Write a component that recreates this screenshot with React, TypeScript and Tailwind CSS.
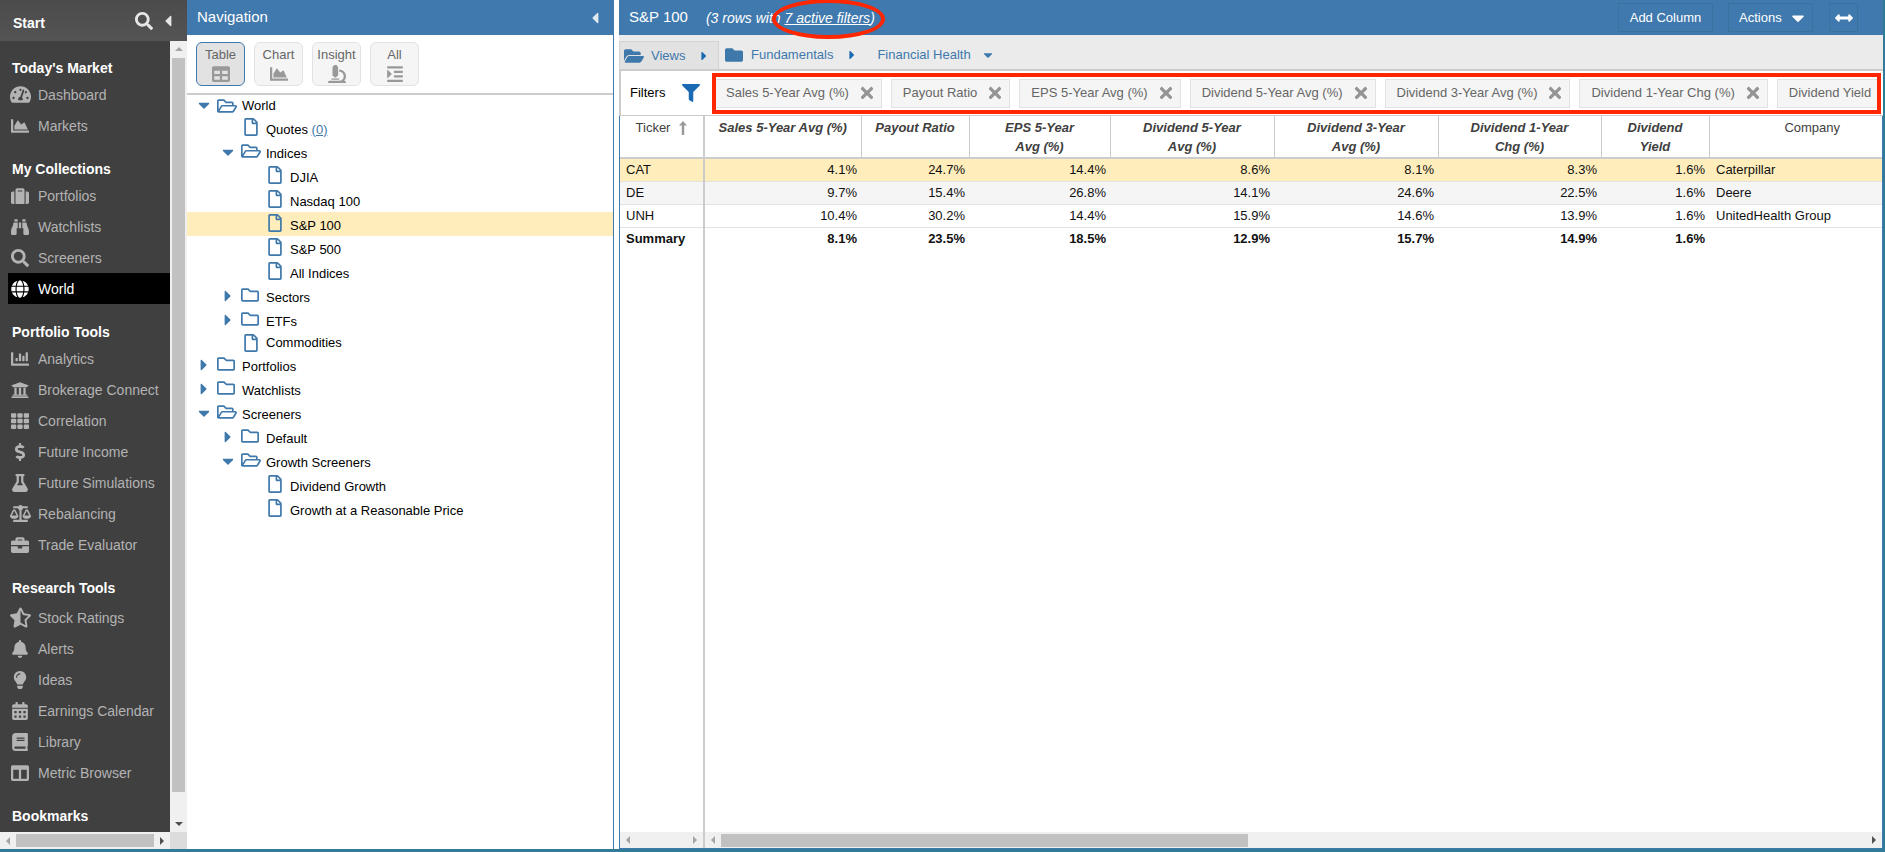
import type { IconType } from "react-icons";
import {
  FaArrowsAltH,
  FaBalanceScale,
  FaBell,
  FaBinoculars,
  FaBook,
  FaBriefcase,
  FaCalendarAlt,
  FaCaretDown,
  FaCaretLeft,
  FaCaretRight,
  FaChartArea,
  FaChartBar,
  FaColumns,
  FaDollarSign,
  FaFilter,
  FaFlask,
  FaFolder,
  FaFolderOpen,
  FaGlobe,
  FaIndent,
  FaLightbulb,
  FaMicroscope,
  FaRegFile,
  FaRegFolder,
  FaRegFolderOpen,
  FaSearch,
  FaStarHalfAlt,
  FaSuitcase,
  FaTable,
  FaTachometerAlt,
  FaTh,
  FaTimes,
  FaUniversity,
} from "react-icons/fa";

interface MenuGroup {
  title: string;
  loose?: boolean;
  items: { label: string; icon: IconType; active?: boolean; wide?: boolean }[];
}

const MENU: MenuGroup[] = [
  {
    title: "Today's Market",
    items: [
      { label: "Dashboard", icon: FaTachometerAlt, wide: true },
      { label: "Markets", icon: FaChartArea },
    ],
  },
  {
    title: "My Collections",
    items: [
      { label: "Portfolios", icon: FaSuitcase },
      { label: "Watchlists", icon: FaBinoculars },
      { label: "Screeners", icon: FaSearch },
      { label: "World", icon: FaGlobe, active: true },
    ],
  },
  {
    title: "Portfolio Tools",
    items: [
      { label: "Analytics", icon: FaChartBar },
      { label: "Brokerage Connect", icon: FaUniversity },
      { label: "Correlation", icon: FaTh },
      { label: "Future Income", icon: FaDollarSign },
      { label: "Future Simulations", icon: FaFlask },
      { label: "Rebalancing", icon: FaBalanceScale, wide: true },
      { label: "Trade Evaluator", icon: FaBriefcase },
    ],
  },
  {
    title: "Research Tools",
    loose: true,
    items: [
      { label: "Stock Ratings", icon: FaStarHalfAlt, wide: true },
      { label: "Alerts", icon: FaBell },
      { label: "Ideas", icon: FaLightbulb },
      { label: "Earnings Calendar", icon: FaCalendarAlt },
      { label: "Library", icon: FaBook },
      { label: "Metric Browser", icon: FaColumns },
    ],
  },
  { title: "Bookmarks", items: [] },
];

interface TreeNode {
  label: string;
  level: 0 | 1 | 2;
  kind: "open" | "closed" | "file";
  count?: number;
  selected?: boolean;
  tight?: boolean;
}

const TREE: TreeNode[] = [
  { label: "World", level: 0, kind: "open", tight: true },
  { label: "Quotes", level: 1, kind: "file", count: 0 },
  { label: "Indices", level: 1, kind: "open" },
  { label: "DJIA", level: 2, kind: "file" },
  { label: "Nasdaq 100", level: 2, kind: "file" },
  { label: "S&P 100", level: 2, kind: "file", selected: true },
  { label: "S&P 500", level: 2, kind: "file" },
  { label: "All Indices", level: 2, kind: "file" },
  { label: "Sectors", level: 1, kind: "closed" },
  { label: "ETFs", level: 1, kind: "closed" },
  { label: "Commodities", level: 1, kind: "file", tight: true },
  { label: "Portfolios", level: 0, kind: "closed" },
  { label: "Watchlists", level: 0, kind: "closed" },
  { label: "Screeners", level: 0, kind: "open" },
  { label: "Default", level: 1, kind: "closed" },
  { label: "Growth Screeners", level: 1, kind: "open" },
  { label: "Dividend Growth", level: 2, kind: "file" },
  { label: "Growth at a Reasonable Price", level: 2, kind: "file" },
];

const INDENT = ["pl-2", "pl-[32px]", "pl-[56px]"];

const MODES: { label: string; icon: IconType; active?: boolean }[] = [
  { label: "Table", icon: FaTable, active: true },
  { label: "Chart", icon: FaChartArea },
  { label: "Insight", icon: FaMicroscope },
  { label: "All", icon: FaIndent },
];

const FILTERS = [
  "Sales 5-Year Avg (%)",
  "Payout Ratio",
  "EPS 5-Year Avg (%)",
  "Dividend 5-Year Avg (%)",
  "Dividend 3-Year Avg (%)",
  "Dividend 1-Year Chg (%)",
  "Dividend Yield",
];

const COLUMNS = [
  { lines: ["Sales 5-Year Avg (%)"], width: "w-[156px]" },
  { lines: ["Payout Ratio"], width: "w-[108px]" },
  { lines: ["EPS 5-Year", "Avg (%)"], width: "w-[141px]" },
  { lines: ["Dividend 5-Year", "Avg (%)"], width: "w-[164px]" },
  { lines: ["Dividend 3-Year", "Avg (%)"], width: "w-[164px]" },
  { lines: ["Dividend 1-Year", "Chg (%)"], width: "w-[163px]" },
  { lines: ["Dividend", "Yield"], width: "w-[108px]" },
];

const ROWS = [
  {
    ticker: "CAT",
    company: "Caterpillar",
    values: ["4.1%", "24.7%", "14.4%", "8.6%", "8.1%", "8.3%", "1.6%"],
    tone: "bg-[#ffeebb]",
  },
  {
    ticker: "DE",
    company: "Deere",
    values: ["9.7%", "15.4%", "26.8%", "14.1%", "24.6%", "22.5%", "1.6%"],
    tone: "bg-[#f5f5f5]",
  },
  {
    ticker: "UNH",
    company: "UnitedHealth Group",
    values: ["10.4%", "30.2%", "14.4%", "15.9%", "14.6%", "13.9%", "1.6%"],
    tone: "bg-white",
  },
];

const SUMMARY = ["8.1%", "23.5%", "18.5%", "12.9%", "15.7%", "14.9%", "1.6%"];

type Direction = "up" | "down" | "left" | "right";

const ARROW_POINTS: Record<Direction, string> = {
  up: "4,10 8,6 12,10",
  down: "4,6 8,10 12,6",
  left: "10,4 6,8 10,12",
  right: "6,4 10,8 6,12",
};

function ScrollArrow({ to, dim }: { to: Direction; dim?: boolean }) {
  return (
    <svg
      viewBox="0 0 16 16"
      className={`size-4 flex-none ${dim ? "fill-[#a3a3a3]" : "fill-[#505050]"}`}
      aria-hidden="true"
    >
      <polygon points={ARROW_POINTS[to]} />
    </svg>
  );
}

function Sidebar() {
  return (
    <aside className="flex w-[187px] flex-none flex-col bg-[#404040]">
      <header className="flex h-[41px] flex-none items-center bg-gradient-to-b from-[#4b4b4b] to-[#545454] pr-[10px] pl-[13px] text-[#e6e6e6]">
        <span className="flex-1 pt-1 text-sm font-bold text-white">Start</span>
        <button aria-label="Search" className="text-lg">
          <FaSearch />
        </button>
        <button aria-label="Collapse menu" className="ml-[6px] text-lg">
          <FaCaretLeft />
        </button>
      </header>

      <div className="flex min-h-0 flex-1">
        <nav className="min-w-0 flex-1 overflow-hidden">
          {MENU.map((group) => (
            <section key={group.title}>
              <h2
                className={`pt-[17px] pl-3 text-sm leading-5 font-bold text-white ${
                  group.loose ? "pb-1" : "pb-px"
                }`}
              >
                {group.title}
              </h2>
              <ul className="pb-px">
                {group.items.map(({ label, icon: Icon, active, wide }) => (
                  <li key={label}>
                    <a
                      href="#"
                      className={`ml-2 flex h-[31px] items-center whitespace-nowrap text-sm ${
                        active ? "bg-black text-white" : "text-[#b3b3b3]"
                      }`}
                    >
                      <span
                        className={`flex w-6 flex-none justify-center ${
                          wide ? "text-[21px]" : "text-lg"
                        }`}
                      >
                        <Icon className="flex-none" />
                      </span>
                      <span className="pl-[6px]">{label}</span>
                    </a>
                  </li>
                ))}
              </ul>
            </section>
          ))}
        </nav>
        <div className="flex w-[17px] flex-none flex-col items-center bg-[#f0f0f0]">
          <ScrollArrow to="up" dim />
          <div className="mt-px mb-6 w-[13px] flex-1 bg-[#c1c1c1]" />
          <ScrollArrow to="down" />
        </div>
      </div>

      <div className="flex h-[17px] flex-none">
        <div className="flex flex-1 items-center bg-[#f0f0f0]">
          <ScrollArrow to="left" dim />
          <div className="h-[13px] flex-1 bg-[#c1c1c1]" />
          <ScrollArrow to="right" />
        </div>
        <div className="w-[17px] bg-[#dcdcdc]" />
      </div>
    </aside>
  );
}

function TreeRow({ node }: { node: TreeNode }) {
  const Caret = node.kind === "open" ? FaCaretDown : FaCaretRight;
  const Icon =
    node.kind === "file"
      ? FaRegFile
      : node.kind === "open"
        ? FaRegFolderOpen
        : FaRegFolder;

  return (
    <li
      className={`flex items-center ${INDENT[node.level]} ${
        node.tight ? "h-[21px]" : "h-6"
      } ${node.selected ? "bg-[#ffeebb]" : ""}`}
    >
      <span className="flex w-[22px] flex-none pb-px text-lg text-[#3f78ab]">
        {node.kind !== "file" && <Caret />}
      </span>
      <span
        className={`flex w-[25px] flex-none text-[#3f78ab] ${
          node.tight ? "" : "pb-[3px]"
        } ${node.kind === "file" ? "pl-px" : ""} ${
          node.kind === "open" ? "text-xl" : "text-lg"
        }`}
      >
        <Icon />
      </span>
      <span className={node.tight ? "" : "pt-[3px]"}>
        {node.label}
        {node.count !== undefined && (
          <>
            {" "}
            <a href="#" className="text-[#3f78ab] underline">
              ({node.count})
            </a>
          </>
        )}
      </span>
    </li>
  );
}

function NavigationPanel() {
  return (
    <section className="flex w-[427px] flex-none flex-col bg-white">
      <header className="flex h-[35px] flex-none items-center justify-between bg-[#4079ad] pr-[10px] pl-[10px] text-[15px] text-white">
        <h1>Navigation</h1>
        <button aria-label="Collapse navigation" className="text-lg text-[#dfe9f2]">
          <FaCaretLeft />
        </button>
      </header>
      <div className="flex min-h-0 flex-1 flex-col border-r border-[#4079ad]">
        <div className="flex gap-[9px] border-b-2 border-[#ccc] px-[9px] py-[7px]">
          {MODES.map(({ label, icon: Icon, active }) => (
            <button
              key={label}
              className={`flex h-11 w-[49px] flex-col items-center rounded-md border pt-0.5 leading-5 text-[#666] ${
                active
                  ? "border-[#4079ad] bg-[#e2e2e2]"
                  : "border-[#e2e2e2] bg-[#f5f5f5]"
              }`}
            >
              {label}
              <Icon className="text-lg text-[#999]" />
            </button>
          ))}
        </div>
        <ul className="text-black">
          {TREE.map((node) => (
            <TreeRow key={node.label} node={node} />
          ))}
        </ul>
      </div>
    </section>
  );
}

function MainHeader() {
  return (
    <header className="flex h-[35px] flex-none items-center bg-[#4079ad] pr-[25px] pl-[10px] text-white">
      <h1 className="text-[15px]">S&amp;P 100</h1>
      <p className="ml-[18px] flex-1 text-sm italic">
        (3 rows with{" "}
        <span className="relative">
          <a href="#" className="underline">
            7 active filters
          </a>
          <span className="absolute -top-[11px] -right-[15px] -left-[13px] h-10 rounded-[50%] border-4 border-[#ff2600]" />
        </span>
        )
      </p>
      <button className="h-[29px] w-[95px] border border-[#3a719f]">
        Add Column
      </button>
      <button className="ml-[15px] flex h-[29px] w-[85px] items-center justify-between border border-[#3a719f] pr-1 pl-[10px]">
        Actions
        <FaCaretDown className="text-xl" />
      </button>
      <button
        aria-label="Fit width"
        className="ml-4 flex h-[29px] w-[29px] items-center justify-center border border-[#3a719f] text-lg"
      >
        <FaArrowsAltH />
      </button>
    </header>
  );
}

function Breadcrumbs() {
  return (
    <nav className="flex h-9 flex-none items-end border-b-2 border-[#ccc] bg-[#ebebeb] text-[#3f78ab]">
      <a
        href="#"
        className="flex h-7 w-[100px] items-center border border-b-0 border-[#d3d3d3] bg-[#e2e2e2] pl-1"
      >
        <FaFolderOpen className="text-xl" />
        <span className="pl-[7px]">Views</span>
        <FaCaretRight className="ml-3 text-sm text-[#1a6ab3]" />
      </a>
      <a href="#" className="flex h-7 items-center pl-[6px]">
        <FaFolder className="text-lg" />
        <span className="pl-2">Fundamentals</span>
        <FaCaretRight className="ml-3 text-sm text-[#1a6ab3]" />
      </a>
      <a href="#" className="flex h-7 items-center pl-[18px]">
        Financial Health
        <FaCaretDown className="ml-[10px] text-sm" />
      </a>
    </nav>
  );
}

function FilterBar() {
  return (
    <div className="relative flex h-[45px] flex-none items-center border-b border-l-2 border-[#ccc] bg-white pl-[9px]">
      <span className="w-[52px] flex-none text-black">Filters</span>
      <FaFilter className="flex-none text-lg text-[#1a6ab3]" />
      <ul className="mr-[6px] ml-[14px] flex min-w-0 flex-1 gap-[9px] overflow-hidden">
        {FILTERS.map((name) => (
          <li
            key={name}
            className="flex h-[29px] flex-none items-center border border-[#e2e2e2] bg-[#f5f5f5] pl-[11px] whitespace-nowrap text-[#666]"
          >
            {name}
            <button
              aria-label={`Remove ${name}`}
              className="pr-[5px] pl-[9px] text-lg text-[#949494]"
            >
              <FaTimes />
            </button>
          </li>
        ))}
      </ul>
      <span className="pointer-events-none absolute top-[2px] right-[2px] bottom-px left-[91px] border-4 border-[#ff2600]" />
    </div>
  );
}

function TickerPane() {
  return (
    <div className="flex w-[85px] flex-none flex-col border-r-2 border-[#ccc]">
      <table className="w-full border-collapse">
        <thead>
          <tr className="h-[42px] border-b-2 border-[#ccc] text-[#404040]">
            <th className="p-0 pt-0.5 align-top leading-[19px] font-normal">
              <span className="flex items-center justify-center gap-[9px]">
                Ticker
                <svg
                  viewBox="0 0 8 14"
                  className="h-[14px] w-2 fill-[#999]"
                  aria-hidden="true"
                >
                  <path d="M4 0 8 4.5H5.2V14H2.8V4.5H0Z" />
                </svg>
              </span>
            </th>
          </tr>
        </thead>
        <tbody>
          {ROWS.map((row) => (
            <tr
              key={row.ticker}
              className={`h-[23px] border-b border-[#e2e2e2] ${row.tone}`}
            >
              <td className="p-0 pl-[6px]">{row.ticker}</td>
            </tr>
          ))}
          <tr className="h-[23px] font-bold">
            <td className="p-0 pl-[6px]">Summary</td>
          </tr>
        </tbody>
      </table>
      <div className="mt-auto flex h-4 items-center justify-between bg-[#f0f0f0]">
        <ScrollArrow to="left" dim />
        <ScrollArrow to="right" dim />
      </div>
    </div>
  );
}

function DataPane() {
  return (
    <div className="flex min-w-0 flex-1 flex-col overflow-hidden">
      <table className="w-[1210px] flex-none table-fixed border-collapse">
        <thead>
          <tr className="h-[42px] border-b-2 border-[#ccc] text-[#404040]">
            {COLUMNS.map((column) => (
              <th
                key={column.lines.join(" ")}
                className={`border-r border-[#ccc] p-0 pt-0.5 align-top leading-[19px] font-bold italic ${column.width}`}
              >
                {column.lines.map((line) => (
                  <span key={line} className="block">
                    {line}
                  </span>
                ))}
              </th>
            ))}
            <th className="w-[206px] p-0 pt-0.5 align-top leading-[19px] font-normal">
              Company
            </th>
          </tr>
        </thead>
        <tbody>
          {ROWS.map((row) => (
            <tr
              key={row.ticker}
              className={`h-[23px] border-b border-[#e2e2e2] ${row.tone}`}
            >
              {row.values.map((value, i) => (
                <td key={i} className="p-0 pr-1 text-right">
                  {value}
                </td>
              ))}
              <td className="p-0 pl-[7px]">{row.company}</td>
            </tr>
          ))}
          <tr className="h-[23px] font-bold">
            {SUMMARY.map((value, i) => (
              <td key={i} className="p-0 pr-1 text-right">
                {value}
              </td>
            ))}
            <td />
          </tr>
        </tbody>
      </table>
      <div className="mt-auto flex h-4 items-center bg-[#f0f0f0]">
        <ScrollArrow to="left" dim />
        <div className="flex-1">
          <div className="h-[13px] w-[46%] bg-[#c1c1c1]" />
        </div>
        <ScrollArrow to="right" />
      </div>
    </div>
  );
}

export default function App() {
  return (
    <div className="flex h-screen overflow-hidden border-b-[3px] border-[#2f7b98] bg-white font-['Liberation_Sans',Arial,sans-serif] text-[13px]">
      <Sidebar />
      <NavigationPanel />
      <main className="ml-[5px] flex min-w-0 flex-1 flex-col border-r-2 border-[#2f7b98]">
        <MainHeader />
        <Breadcrumbs />
        <FilterBar />
        <div className="flex min-h-0 flex-1 border-x border-b border-[#4079ad] text-[#111]">
          <TickerPane />
          <DataPane />
        </div>
      </main>
    </div>
  );
}
